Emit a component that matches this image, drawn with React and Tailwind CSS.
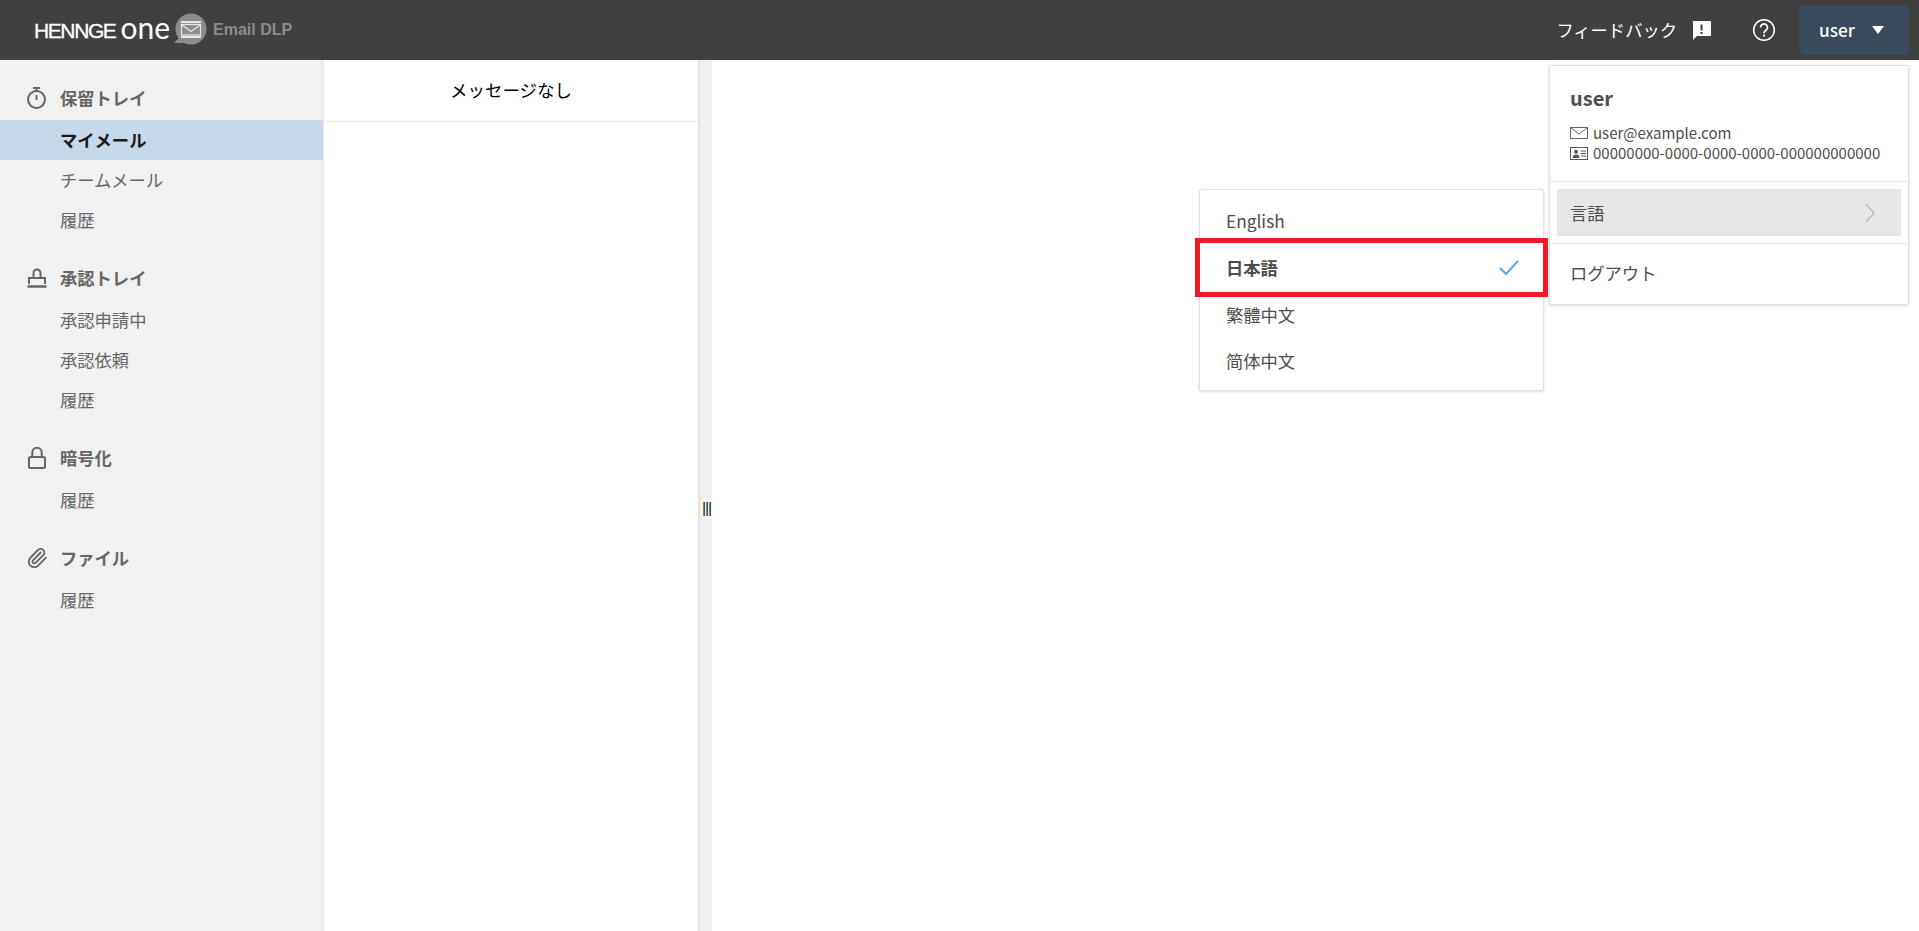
import { Paperclip } from "lucide-react";

const sections = [
  { title: "保留トレイ", icon: "timer", items: ["マイメール", "チームメール", "履歴"] },
  { title: "承認トレイ", icon: "stamp", items: ["承認申請中", "承認依頼", "履歴"] },
  { title: "暗号化", icon: "lock", items: ["履歴"] },
  { title: "ファイル", icon: "clip", items: ["履歴"] },
];

function SectionIcon({ name }) {
  if (name === "timer") {
    return (
      <svg width="22" height="24" viewBox="0 0 22 24" fill="none" stroke="#666" strokeWidth="2">
        <circle cx="10.500" cy="13.500" r="8.500" />
        <path d="M7 2h7M10.500 2v3M10.500 9v5" />
      </svg>
    );
  }
  if (name === "stamp") {
    return (
      <svg width="22" height="24" viewBox="0 0 22 24" fill="none" stroke="#666" strokeWidth="2">
        <path d="M7.500 12V7a3.500 3.500 0 0 1 7 0v5M3 18v-6h16v6" />
        <path d="M1.500 20.500h19" strokeWidth="2.500" />
      </svg>
    );
  }
  if (name === "lock") {
    return (
      <svg width="22" height="24" viewBox="0 0 22 24" fill="none" stroke="#666" strokeWidth="2">
        <rect x="3" y="11" width="16" height="11" rx="1.500" />
        <path d="M6.300 11V6.500a4.700 4.700 0 0 1 9.400 0V11" />
      </svg>
    );
  }
  return <Paperclip size={22} strokeWidth={2} color="#666" />;
}

function Logo() {
  return (
    <div className="flex items-center pl-[34px]">
      <span className="font-['Liberation_Sans',sans-serif] text-[21px] leading-none text-white tracking-[-1.4px] [-webkit-text-stroke:0.3px_white]">HENNGE</span>
      <span className="ml-[5px] -mt-[7px] font-['Lato',sans-serif] text-[30px] leading-none text-white">one</span>
      <svg className="ml-[3px]" width="34" height="34" viewBox="0 0 34 34">
        <circle cx="18" cy="16" r="15.500" fill="#8c8c8c" />
        <path d="M1 30h9l6-4-8-3z" fill="#8c8c8c" />
        <path d="M8 9h20M8 24h20" stroke="#e8e8e8" strokeWidth="2" />
        <rect x="8.500" y="11.500" width="19" height="10.500" fill="none" stroke="#e8e8e8" strokeWidth="1.200" />
        <path d="m9 12 9 6.500 9-6.500" fill="none" stroke="#e8e8e8" strokeWidth="1.200" />
      </svg>
      <span className="ml-[6px] font-['Liberation_Sans',sans-serif] font-bold text-[16px] leading-none text-[#8c8c8c]">Email DLP</span>
    </div>
  );
}

export default function App() {
  return (
    <div className="relative flex h-screen flex-col overflow-hidden bg-white font-['Noto_Sans_CJK_JP',sans-serif] text-[17.3px] text-[#4d4d4d]">
      <header className="flex h-[60px] shrink-0 items-center justify-between bg-[#404040] pr-[10px]">
        <Logo />
        <div className="flex items-center text-white">
          <span>フィードバック</span>
          <svg className="ml-[14px]" width="20" height="20" viewBox="0 0 20 20">
            <path d="M2 1h17a1 1 0 0 1 1 1v13a1 1 0 0 1-1 1H6l-4 4V2a1 1 0 0 1 0-1z" fill="#fff" />
            <path d="M10.500 4.500v6M10.500 12v2" stroke="#404040" strokeWidth="2" />
          </svg>
          <svg className="ml-[41px]" width="24" height="24" viewBox="0 0 24 24" fill="none" stroke="#fff">
            <circle cx="12" cy="12" r="10.300" strokeWidth="1.500" />
            <path d="M8.500 9.500a3.500 3.500 0 1 1 5.500 2.800c-1.300.9-2 1.500-2 3" strokeWidth="1.700" />
            <path d="M12 16.500v2" strokeWidth="1.800" />
          </svg>
          <button className="ml-[23px] flex h-[50px] w-[110px] items-center rounded-[5px] bg-[#394b5d] pl-[20px] font-medium">
            user
            <span className="ml-[17px] h-0 w-0 border-x-[6.500px] border-t-[8px] border-x-transparent border-t-white" />
          </button>
        </div>
      </header>

      <div className="flex min-h-0 flex-1">
        <nav className="flex w-[324px] shrink-0 flex-col gap-[18px] border-r border-[#e6e6e6] bg-[#f1f1f1] pt-[18px] text-[#666]">
          {sections.map((section) => (
            <div key={section.title}>
              <div className="mb-[2px] flex h-[40px] items-center gap-[12px] pl-[26px] font-bold">
                <SectionIcon name={section.icon} />
                {section.title}
              </div>
              {section.items.map((item) => (
                <div
                  key={item}
                  className={
                    item === "マイメール"
                      ? "flex h-[40px] items-center bg-[#c5d9eb] pl-[60px] font-bold text-[#1a1a1a]"
                      : "flex h-[40px] items-center pl-[60px]"
                  }
                >
                  {item}
                </div>
              ))}
            </div>
          ))}
        </nav>

        <section className="w-[374px] shrink-0">
          <div className="flex h-[62px] items-center justify-center border-b border-[#e6e6e6] text-[17.5px] text-black">メッセージなし</div>
        </section>

        <div className="flex w-[14px] shrink-0 items-center justify-center gap-[1px] border-l-2 border-[#e4e4e4] bg-[#f0f0f0] pl-[1px] pt-[26px]">
          <span className="h-[14px] w-[2px] border-l border-r border-l-[#c07a10] border-r-[#1060a0]" />
          <span className="h-[14px] w-[2px] border-l border-r border-l-[#c07a10] border-r-[#1060a0]" />
          <span className="h-[14px] w-[2px] border-l border-r border-l-[#c07a10] border-r-[#1060a0]" />
        </div>

        <main className="flex-1" />
      </div>

      <div className="absolute left-[1549px] top-[65px] w-[360px] rounded-[2px] border border-[#e0e0e0] bg-white shadow-[0_1px_3px_rgba(0,0,0,0.12)]">
        <div className="h-[115px] px-[20px] pt-[14px]">
          <div className="text-[20px] font-bold leading-[36px]">user</div>
          <div className="mt-[7px] flex h-[20px] items-center gap-[5px] text-[15px]">
            <svg width="18" height="12" viewBox="0 0 18 12" fill="none" stroke="#666">
              <rect x="0.500" y="0.500" width="17" height="11" />
              <path d="m1 1 8 6 8-6" />
            </svg>
            user@example.com
          </div>
          <div className="flex h-[20px] items-center gap-[5px] text-[15px]">
            <svg width="18" height="13" viewBox="0 0 18 13">
              <rect x="0.500" y="0.500" width="17" height="12" fill="#fff" stroke="#555" />
              <circle cx="6" cy="4.800" r="2" fill="#555" />
              <path d="M2.500 11c0-2.500 1.500-3.500 3.500-3.500s3.500 1 3.500 3.500z" fill="#555" />
              <path d="M11 4h5M11 6.500h5M11 9h5" stroke="#555" />
            </svg>
            00000000-0000-0000-0000-000000000000
          </div>
        </div>
        <div className="border-y border-[#e6e6e6] px-[7px] py-[7px]">
          <div className="flex h-[47px] items-center justify-between bg-[#e7e7e7] pl-[13px] pr-[26px]">
            言語
            <svg width="10" height="20" viewBox="0 0 10 20" fill="none" stroke="#999">
              <path d="m1 1 8 9-8 9" />
            </svg>
          </div>
        </div>
        <div className="flex h-[60px] items-center px-[20px] pb-[2px]">ログアウト</div>
      </div>

      <div className="absolute left-[1199px] top-[189px] w-[345px] rounded-[2px] border border-[#e0e0e0] bg-white pb-[6px] pt-[6px] shadow-[0_1px_3px_rgba(0,0,0,0.12)]">
        <div className="flex h-[47px] items-center pl-[26px] pt-[2px]">English</div>
        <div className="flex h-[49px] items-center justify-between pl-[26px] pr-[24px] font-bold outline-[5px] outline-[#ed1c24]">
          日本語
          <svg width="20" height="15" viewBox="0 0 20 15" fill="none" stroke="#4da6f5" strokeWidth="2">
            <path d="m1 8 6 6L19 1" />
          </svg>
        </div>
        <div className="flex h-[46px] items-center pl-[26px]">繁體中文</div>
        <div className="flex h-[46px] items-center pl-[26px]">简体中文</div>
      </div>
    </div>
  );
}
